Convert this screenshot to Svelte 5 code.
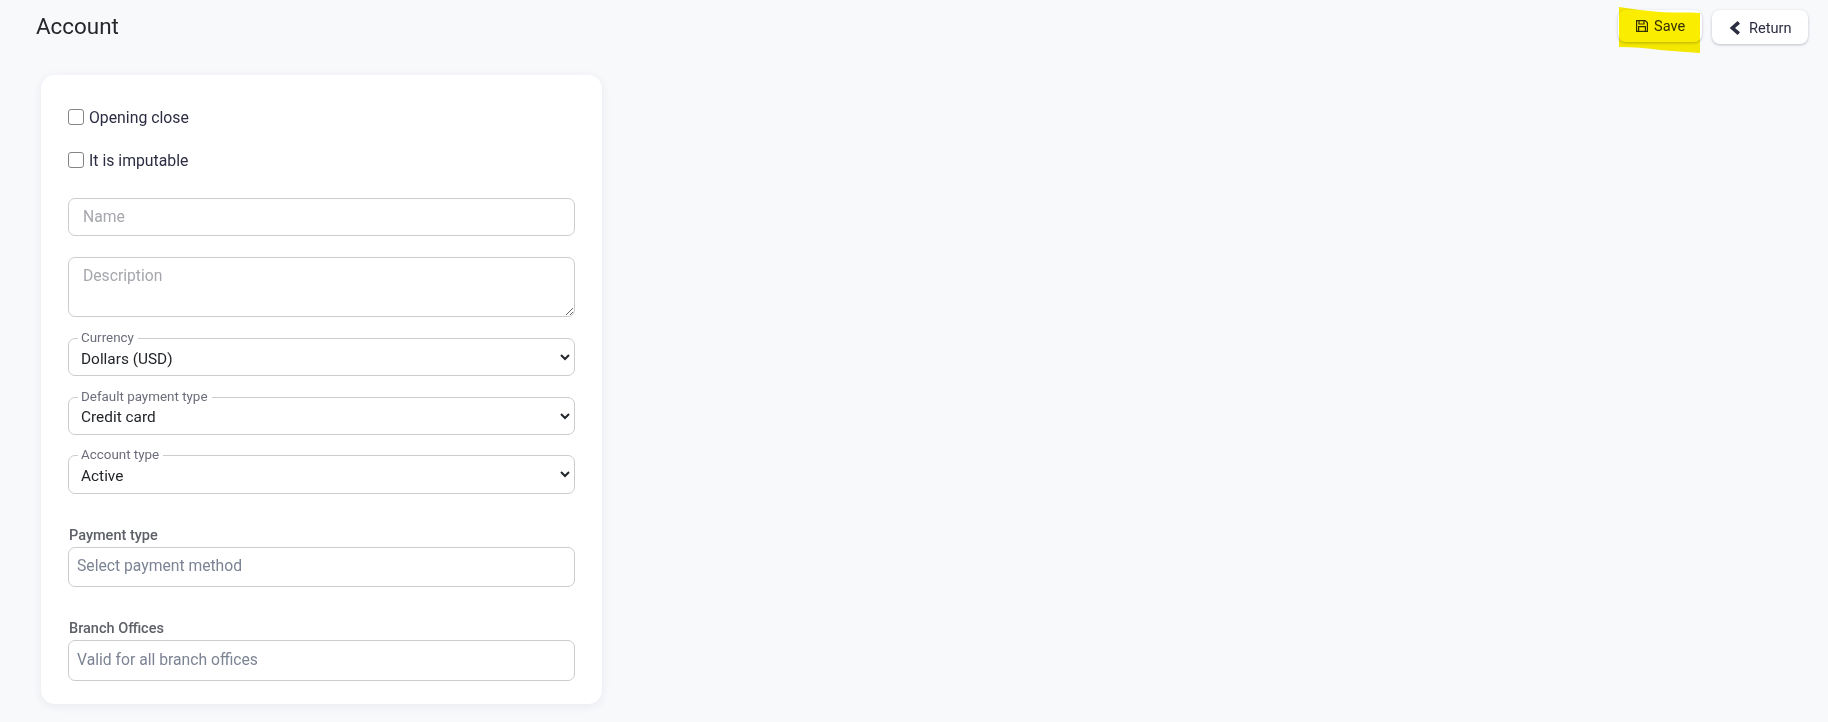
<script>
    const selects = [
        { legend: 'Currency', value: 'Dollars (USD)' },
        { legend: 'Default payment type', value: 'Credit card' },
        { legend: 'Account type', value: 'Active' }
    ];
</script>

<div class="page">
    <header class="top">
        <h1>Account</h1>
        <div class="actions">
            <div class="save-wrap">
                <button class="btn save">
                    <svg width="14" height="14" viewBox="0 0 14 14" fill="none" stroke="currentColor" stroke-width="1.2">
                        <path d="M1.6 1.6h8.6l2.2 2.2v8.6H1.6z" />
                        <path d="M4 1.6v3.4h5V1.6" />
                        <path d="M3.6 12.4V7.6h6.8v4.8" />
                    </svg>
                    Save
                </button>
                <svg class="marker" width="81" height="47" viewBox="0 0 81 47" aria-hidden="true">
                    <path d="M0 0 C14 2 28 4 41 5 C56 6 68 5 81 6 L81 46 C66 45 54 44 41 43 C28 41 14 40 0 40 Z" fill="#fbed00" />
                </svg>
            </div>
            <button class="btn back">
                <svg class="chev" width="12" height="14" viewBox="0 0 12 14" fill="none" stroke="currentColor" stroke-width="3.6">
                    <path d="M9.8 1.4 3.4 7l6.4 5.6" />
                </svg>
                Return
            </button>
        </div>
    </header>

    <form class="card">
        <label class="check first"><input type="checkbox" /> Opening close</label>
        <label class="check second"><input type="checkbox" /> It is imputable</label>

        <input class="field name" type="text" placeholder="Name" />
        <textarea class="field desc" placeholder="Description"></textarea>

        {#each selects as s}
            <fieldset class="sel">
                <legend>{s.legend}</legend>
                <select>
                    <option>{s.value}</option>
                </select>
            </fieldset>
        {/each}

        <div class="group pay">
            <span class="lbl">Payment type</span>
            <input class="field multi" type="text" placeholder="Select payment method" />
        </div>
        <div class="group branch">
            <span class="lbl">Branch Offices</span>
            <input class="field multi" type="text" placeholder="Valid for all branch offices" />
        </div>
    </form>
</div>

<style>
    :global(body) {
        margin: 0;
        background: #f8f9fb;
        font-family: Roboto, "Liberation Sans", sans-serif;
        color: #212529;
    }

    .page {
        height: 722px;
        overflow: hidden;
    }

    .top {
        display: flex;
        justify-content: space-between;
        padding: 10px 20px 0 36px;
        height: 75px;
        box-sizing: border-box;
    }

    h1 {
        margin: 0;
        font-size: 22.4px;
        font-weight: 400;
        line-height: 32px;
        color: #26262b;
    }

    .actions {
        display: flex;
        align-items: flex-start;
        gap: 10px;
    }

    .save-wrap {
        position: relative;
    }

    .btn {
        display: flex;
        align-items: center;
        gap: 5px;
        width: 96px;
        height: 34px;
        padding: 0 0 0 17px;
        border: 0;
        border-radius: 8px;
        background: #fff;
        box-shadow: 0 1px 3px rgba(30, 40, 70, 0.28);
        font: 14.6px Roboto, sans-serif;
        color: #2b2d42;
    }

    .back {
        gap: 8px;
        padding-top: 2px;
    }

    .save {
        width: 84px;
        height: 32px;
        color: #333;
    }

    .marker {
        position: absolute;
        left: 1px;
        top: -3px;
        mix-blend-mode: multiply;
    }

    .card {
        width: 561px;
        height: 629px;
        margin-left: 41px;
        padding: 34px 27px 0;
        box-sizing: border-box;
        background: #fff;
        border-radius: 14px;
        box-shadow: 0 2px 10px rgba(40, 50, 90, 0.08);
    }

    .check {
        display: flex;
        align-items: center;
        gap: 5px;
        height: 16px;
        font-size: 15.8px;
        color: #2b2d42;
    }

    .check input {
        appearance: none;
        width: 16px;
        height: 16px;
        margin: 0;
        border: 1px solid #858585;
        border-radius: 3px;
        background: #fff;
    }

    .second {
        margin-top: 26px;
        padding-top: 1px;
    }

    .field {
        display: block;
        width: 100%;
        box-sizing: border-box;
        border: 1px solid #ccc;
        border-radius: 7px;
        background: #fff;
        font: 15.7px Roboto, sans-serif;
        color: #212529;
        outline: none;
    }

    .field::placeholder {
        color: #a5a7ad;
    }

    .name {
        height: 38px;
        margin-top: 30px;
        padding: 0 14px 2px;
    }

    .desc {
        height: 60px;
        margin-top: 21px;
        margin-bottom: 21px;
        padding: 8px 14px;
        resize: vertical;
    }

    .sel {
        position: relative;
        height: 38px;
        margin: 0 0 20.5px;
        padding: 0;
        box-sizing: border-box;
        border: 1px solid #ccc;
        border-radius: 7px;
    }

    .sel:last-of-type {
        height: 39px;
    }

    .sel legend {
        position: absolute;
        top: -8px;
        left: 9px;
        padding: 0 4px 0 3px;
        background: #fff;
        font-size: 13.4px;
        line-height: 14px;
        color: #6b6d7a;
    }

    .sel select {
        display: block;
        width: calc(100% - 1px);
        height: 36px;
        padding: 3px 4px 0 8px;
        border: 0;
        outline: none;
        background: transparent;
        font: 15.4px Roboto, sans-serif;
        color: #212529;
    }

    .group {
        display: flex;
        flex-direction: column;
        gap: 3px;
    }

    .pay {
        margin-top: 33px;
    }

    .branch {
        margin-top: 33px;
    }

    .lbl {
        padding-left: 1px;
        font-size: 14.5px;
        font-weight: 500;
        line-height: 17px;
        color: #5e6068;
    }

    .multi {
        height: 40px;
        padding: 0 8px 2px;
    }

    .pay .multi {
        padding-bottom: 4px;
    }

    .branch .multi {
        height: 41px;
    }

    .multi::placeholder {
        color: #7c8494;
    }
</style>
